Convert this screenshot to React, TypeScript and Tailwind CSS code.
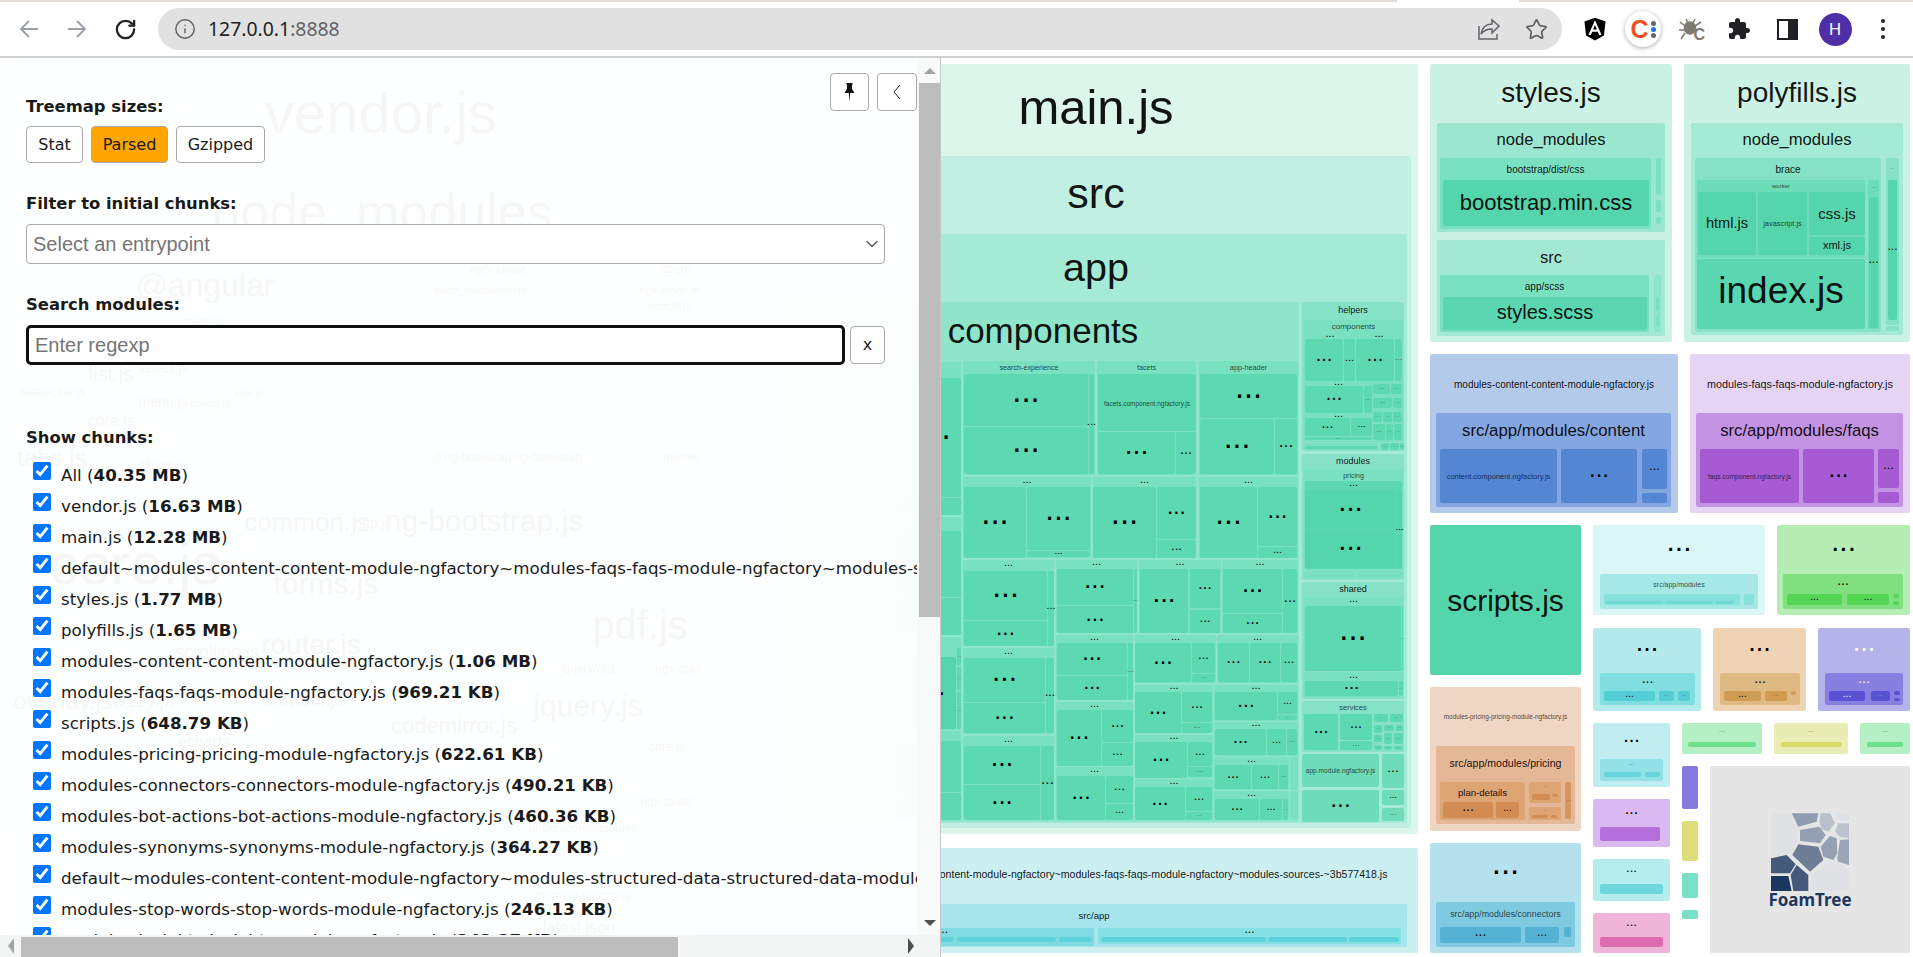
import { ChevronDown, Info, RotateCw, Star } from "lucide-react";
import { FaAngular } from "react-icons/fa";

type Item = {
  x1: number;
  y1: number;
  x2: number;
  y2: number;
  fill: string;
  label?: string;
  size?: number;
  lx?: number;
  ly?: number;
  ink?: string;
};

type Leaf = [number, number, number, number];

const G1 = "#ddf6ec";
const G2 = "#c1efe1";
const G3 = "#a5ead4";
const G4 = "#8fe5ca";
const G5 = "#79e0c0";
const G6 = "#5dd9b2";
const G7 = "#54d5ac";

const box = (
  x1: number,
  y1: number,
  x2: number,
  y2: number,
  fill: string,
  label?: string,
  size?: number,
  ly?: number,
  lx?: number,
  ink?: string,
): Item => ({ x1, y1, x2, y2, fill, label, size, ly, lx, ink });

const ghost = (label: string, size: number, ly: number, lx: number) => box(0, 0, 0, 0, "none", label, size, ly, lx);

const leafs = (list: Leaf[], fill = G6) => list.map(([a, b, c, d]) => box(a, b, c, d, fill, "..."));

// grupo con cabecera de puntos y hojas adentro
const block = (x1: number, y1: number, x2: number, y2: number, hy: number, list: Leaf[]) => [
  box(x1, y1, x2, y2, G5),
  box(x1, y1, x2, hy, "none", "...", 11),
  ...leafs(list),
];

const mainChunk: Item[] = [
  box(700, 64, 1418, 834, G1, "main.js", 49, 107, 1096),
  box(700, 156, 1411, 828, G2, "src", 43, 193, 1096),
  box(700, 234, 1407, 823, G3, "app", 39.5, 267, 1096),
  box(787, 302, 1299, 822, G4, "components", 35, 330, 1043),

  box(900, 362, 961, 515, G5),
  box(913, 378, 961, 497, G6, "...", 33),
  box(900, 498, 961, 515, G6),
  box(900, 517, 961, 635, G5),
  box(900, 531, 961, 597, G6),
  box(900, 598, 961, 635, G6),
  box(900, 637, 961, 730, G5),
  box(913, 657, 956, 729, G7, "...", 26, 694),
  ...leafs([[957, 648, 961, 665], [957, 667, 961, 690], [957, 692, 961, 729]]),
  box(900, 731, 961, 820, G5),
  box(900, 741, 961, 792, G6),
  box(900, 793, 961, 820, G6),

  box(963, 361, 1095, 475, G5, "search-experience", 7.2, 367),
  ...leafs([[964, 374, 1088, 426], [964, 427, 1088, 474], [1089, 374, 1094, 474]]),
  box(1097, 361, 1196, 475, G5, "facets", 7.2, 367),
  box(1098, 374, 1196, 431, G6, "facets.component.ngfactory.js", 6.5, 403),
  ...leafs([[1098, 432, 1175, 474], [1176, 432, 1196, 474]]),
  box(1199, 361, 1298, 475, G5, "app-header", 7.3, 367),
  ...leafs([[1200, 374, 1297, 418], [1200, 419, 1274, 474], [1275, 419, 1297, 474]]),

  ...block(963, 477, 1091, 558, 487, [[964, 487, 1026, 558], [1027, 487, 1090, 550], [1027, 551, 1090, 557]]),
  ...block(1093, 477, 1196, 558, 487, [[1093, 487, 1156, 558], [1157, 487, 1196, 539], [1157, 540, 1196, 558]]),
  ...block(1199, 477, 1298, 558, 487, [[1200, 487, 1257, 558], [1258, 487, 1297, 546], [1258, 547, 1297, 558]]),

  ...block(963, 560, 1054, 646, 571, [[964, 571, 1047, 620], [964, 621, 1047, 646], [1048, 571, 1054, 646]]),
  ...block(963, 648, 1054, 734, 658, [[964, 658, 1045, 702], [964, 703, 1045, 733], [1046, 658, 1054, 733]]),
  ...block(963, 736, 1054, 820, 746, [[964, 746, 1040, 784], [964, 785, 1040, 820], [1041, 746, 1054, 820]]),

  ...block(1056, 560, 1137, 633, 569, [[1057, 569, 1133, 605], [1057, 606, 1133, 633], [1134, 569, 1137, 633]]),
  ...block(1139, 560, 1221, 633, 569, [[1140, 569, 1188, 633], [1190, 569, 1220, 608], [1190, 610, 1220, 633]]),
  ...block(1222, 560, 1298, 633, 569, [[1223, 569, 1282, 613], [1223, 614, 1282, 633], [1283, 569, 1297, 633]]),

  ...block(1056, 635, 1133, 700, 643, [[1057, 643, 1127, 675], [1057, 676, 1127, 700], [1128, 643, 1133, 700]]),
  ...block(1056, 702, 1133, 766, 710, [[1057, 710, 1101, 766], [1102, 710, 1133, 742], [1102, 743, 1133, 766]]),
  ...block(1056, 767, 1133, 820, 776, [[1057, 776, 1105, 820], [1106, 776, 1133, 803], [1106, 804, 1133, 820]]),
  ...block(1135, 635, 1216, 683, 643, [[1135, 643, 1191, 682], [1192, 643, 1215, 673], [1192, 674, 1215, 682]]),
  ...block(1217, 635, 1298, 683, 643, [[1218, 643, 1249, 682], [1250, 643, 1280, 682], [1281, 643, 1297, 682]]),
  ...block(1135, 685, 1213, 733, 692, [[1135, 692, 1181, 733], [1182, 692, 1212, 722], [1182, 723, 1212, 733]]),
  ...block(1135, 735, 1213, 778, 742, [[1135, 742, 1187, 778], [1188, 742, 1212, 766], [1188, 767, 1212, 777]]),
  ...block(1135, 779, 1213, 820, 787, [[1135, 787, 1185, 820], [1186, 787, 1212, 811], [1186, 812, 1212, 820]]),
  ...block(1214, 685, 1298, 721, 692, [[1215, 692, 1277, 720], [1278, 692, 1297, 714], [1278, 715, 1297, 720]]),
  ...block(1214, 722, 1298, 756, 729, [[1215, 729, 1266, 755], [1267, 729, 1286, 755], [1287, 729, 1297, 755]]),
  ...block(1214, 757, 1289, 790, 765, [[1215, 765, 1251, 789], [1252, 765, 1278, 789], [1279, 765, 1288, 789]]),
  ...block(1214, 791, 1289, 820, 799, [[1215, 799, 1259, 820], [1260, 799, 1282, 820], [1283, 799, 1288, 820]]),
  box(1290, 757, 1298, 790, G5),
  box(1290, 791, 1298, 820, G5),

  // helpers
  box(1302, 302, 1404, 451, "#85e2c6", "helpers", 9, 310),
  box(1304, 320, 1403, 442, G5, "components", 8, 326),
  ...block(1305, 334, 1355, 381, 339, [[1305, 339, 1343, 381], [1344, 339, 1355, 381]]),
  ...block(1356, 334, 1402, 381, 339, [[1356, 339, 1394, 381], [1395, 339, 1402, 381]]),
  ...block(1305, 382, 1372, 413, 386, [[1305, 386, 1363, 413], [1364, 386, 1372, 413]]),
  ...block(1305, 414, 1372, 440, 418, [[1305, 418, 1350, 436], [1351, 418, 1372, 436], [1305, 437, 1372, 440]]),
  ...leafs([
    [1373, 384, 1390, 394], [1391, 384, 1402, 394], [1373, 398, 1392, 408], [1393, 398, 1402, 408],
    [1373, 412, 1382, 422], [1383, 412, 1392, 422], [1393, 412, 1402, 422], [1373, 424, 1385, 440],
    [1386, 424, 1393, 440], [1394, 424, 1402, 440],
  ]),
  box(1304, 443, 1378, 450, G5),
  box(1305, 446, 1377, 449, G6),
  ...leafs([[1381, 443, 1389, 450], [1390, 443, 1399, 450], [1400, 443, 1404, 450]]),

  // modules
  box(1302, 454, 1404, 580, "#85e2c6", "modules", 9, 461),
  box(1304, 469, 1403, 570, G5, "pricing", 7, 475),
  box(1305, 481, 1402, 569, G6, "...", 11, 485),
  ...leafs([[1305, 491, 1396, 529], [1305, 530, 1396, 568], [1397, 491, 1402, 568]], G7),
  box(1304, 571, 1355, 578, G5),
  box(1357, 571, 1403, 578, G5),

  // shared
  box(1302, 582, 1404, 699, "#85e2c6", "shared", 9, 589),
  box(1304, 597, 1403, 671, G5, "...", 11, 601),
  ...leafs([[1305, 606, 1401, 671], [1402, 606, 1403, 671]]),
  box(1304, 672, 1403, 697, G5, "...", 11, 677),
  ...leafs([[1305, 681, 1398, 696], [1399, 681, 1403, 696]]),

  // services
  box(1302, 701, 1404, 752, "#85e2c6", "services", 7.5, 707),
  ...leafs([
    [1304, 714, 1338, 750], [1340, 714, 1372, 740], [1340, 741, 1372, 750], [1374, 714, 1388, 722],
    [1390, 714, 1403, 722], [1374, 725, 1382, 733], [1384, 725, 1394, 731], [1396, 725, 1403, 731],
    [1374, 735, 1382, 742], [1384, 733, 1392, 744], [1394, 733, 1403, 744], [1374, 745, 1382, 750],
    [1384, 746, 1392, 750], [1394, 746, 1403, 750],
  ]),

  box(1302, 754, 1379, 787, "#6edcb9", "app.module.ngfactory.js", 6.6),
  box(1382, 754, 1404, 788, "#6edcb9", "..."),
  box(1302, 790, 1379, 822, "#6edcb9", "..."),
  box(1382, 790, 1404, 805, "#6edcb9", "..."),
  box(1382, 808, 1404, 821, "#6edcb9", "..."),
];

const sharedChunk: Item[] = [
  box(700, 848, 1418, 953, "#cceff1", "default~modules-content-content-module-ngfactory~modules-faqs-faqs-module-ngfactory~modules-sources-~3b577418.js", 10.6, 874, 1101),
  box(700, 904, 1407, 947, "#a6e5eb", "src/app", 9.5, 915, 1094),
  box(700, 928, 1094, 946, "#7fdae2", "...", 12, 932, 943),
  box(700, 937, 954, 942, "#5cd3dc"),
  box(957, 937, 1056, 942, "#5cd3dc"),
  box(1059, 937, 1092, 942, "#5cd3dc"),
  box(1098, 928, 1401, 944, "#85e0e4", "...", 12, 932),
  box(1101, 937, 1266, 942, "#5cd3dc"),
  box(1268, 937, 1347, 942, "#5cd3dc"),
  box(1349, 937, 1399, 942, "#5cd3dc"),
];

const stylesChunk: Item[] = [
  box(1430, 64, 1672, 342, "#ccf2e6", "styles.js", 28, 92),
  box(1437, 123, 1665, 232, "#9be6cf", "node_modules", 16.6, 139),
  box(1440, 158, 1651, 229, G5, "bootstrap/dist/css", 10, 169),
  box(1443, 180, 1649, 226, G7, "bootstrap.min.css", 22, 202),
  box(1656, 158, 1661, 195, G5),
  box(1656, 200, 1661, 212, G5),
  box(1656, 217, 1661, 224, G5),
  box(1437, 240, 1665, 336, "#a3e8d3", "src", 16.6, 257),
  box(1440, 275, 1649, 332, G5, "app/scss", 10, 286),
  box(1443, 297, 1647, 330, "#5ad6b0", "styles.scss", 20, 312),
  box(1654, 275, 1661, 332, "#8de4c9"),
  box(1656, 297, 1659, 311, G5),
  box(1656, 316, 1659, 326, G5),
];

const polyfillsChunk: Item[] = [
  box(1684, 64, 1910, 342, "#ccf2e6", "polyfills.js", 28, 92),
  box(1691, 123, 1903, 335, G3, "node_modules", 16.6, 139),
  box(1695, 158, 1881, 332, "#85e2c6", "brace", 10, 169),
  box(1697, 180, 1865, 258, "#6edcb9", "worker", 6, 186),
  box(1698, 192, 1756, 255, G7, "html.js", 14.6, 223),
  box(1758, 192, 1807, 255, G7, "javascript.js", 7.4, 223),
  box(1809, 192, 1865, 235, G7, "css.js", 15, 213),
  box(1809, 237, 1865, 255, G7, "xml.js", 11, 245),
  box(1697, 259, 1865, 329, "#5ad6b0", "index.js", 37, 290),
  box(1868, 180, 1879, 329, "#6edcb9", "...", 5, 188),
  box(1869, 197, 1878, 328, G7, "...", 12, 262),
  box(1886, 158, 1899, 325, "#85e2c6", "...", 5, 169),
  box(1888, 180, 1897, 320, G7, "...", 12, 249),
  box(1886, 326, 1899, 331, "#85e2c6"),
];

const moduleChunks: Item[] = [
  box(1430, 354, 1678, 513, "#b3caeb", "modules-content-content-module-ngfactory.js", 10, 384),
  box(1436, 413, 1671, 507, "#83a6e0", "src/app/modules/content", 16.8, 430),
  box(1440, 449, 1557, 503, "#5586d3", "content.component.ngfactory.js", 7.5),
  box(1561, 449, 1637, 503, "#5586d3", "...", 24),
  box(1642, 449, 1667, 489, "#5586d3", "...", 13),
  box(1642, 493, 1667, 503, "#5586d3", "...", 6),

  box(1690, 354, 1910, 513, "#e6d4f5", "modules-faqs-faqs-module-ngfactory.js", 10.8, 384),
  box(1696, 413, 1903, 507, "#c492e3", "src/app/modules/faqs", 16.7, 430),
  box(1700, 449, 1799, 503, "#a65bd5", "faqs.component.ngfactory.js", 6.7),
  box(1803, 449, 1874, 503, "#a65bd5", "...", 24),
  box(1878, 449, 1899, 488, "#a65bd5", "...", 13),
  box(1878, 492, 1899, 503, "#a65bd5", "...", 6),

  box(1430, 525, 1581, 675, G7, "scripts.js", 30),

  box(1593, 525, 1765, 615, "#dbf6f6", "...", 30, 549),
  box(1600, 574, 1758, 609, "#a5e8e5", "src/app/modules", 7, 584),
  box(1604, 594, 1740, 605, "#86e0dc"),
  box(1606, 601, 1663, 604, "#6fd9d4"),
  box(1665, 601, 1713, 604, "#6fd9d4"),
  box(1715, 601, 1734, 604, "#6fd9d4"),
  box(1744, 594, 1754, 605, "#86e0dc"),

  box(1777, 525, 1910, 615, "#b6edb4", "...", 30, 549),
  box(1783, 574, 1903, 609, "#80e080", "...", 14, 584),
  box(1787, 594, 1842, 605, "#54d554", "...", 10),
  box(1847, 594, 1889, 605, "#54d554", "...", 10),
  box(1893, 594, 1899, 598, "#54d554"),
  box(1893, 601, 1899, 605, "#54d554"),

  box(1593, 628, 1701, 711, "#b5eaec", "...", 27, 650),
  box(1600, 673, 1695, 705, "#80dde0", "...", 14, 682),
  box(1604, 691, 1655, 701, "#54cdd5", "...", 10),
  box(1659, 691, 1674, 701, "#54cdd5", "...", 6),
  box(1678, 691, 1690, 701, "#54cdd5", "...", 6),

  box(1713, 628, 1806, 711, "#eed4b5", "...", 27, 650),
  box(1720, 673, 1800, 705, "#e0b882", "...", 14, 682),
  box(1724, 691, 1761, 701, "#d09c54", "...", 10),
  box(1765, 691, 1787, 701, "#d09c54", "...", 6),
  box(1791, 691, 1796, 695, "#d09c54"),

  box(1818, 628, 1910, 711, "#b6b2ea", "...", 27, 650, undefined, "#ffffff"),
  box(1825, 673, 1903, 705, "#8880e0", "...", 14, 682, undefined, "#ffffff"),
  box(1829, 691, 1865, 701, "#5a52d5", "...", 10, undefined, undefined, "#ffffff"),
  box(1871, 691, 1890, 701, "#5a52d5", "...", 6, undefined, undefined, "#ffffff"),
  box(1894, 691, 1900, 695, "#5a52d5"),
  box(1894, 698, 1900, 701, "#5a52d5"),

  box(1430, 687, 1581, 831, "#efd5c3", "modules-pricing-pricing-module-ngfactory.js", 6.4, 716),
  box(1436, 746, 1575, 824, "#e4b896", "src/app/modules/pricing", 10.6, 763),
  box(1440, 782, 1525, 820, "#dea574", "plan-details", 9.6, 792),
  box(1443, 802, 1493, 818, "#d28c52", "...", 14),
  box(1496, 802, 1519, 818, "#d28c52", "...", 10),
  box(1529, 782, 1561, 803, "#dea574", "...", 5, 787),
  box(1532, 794, 1550, 800, "#d28c52"),
  box(1552, 794, 1558, 797, "#d28c52"),
  box(1529, 807, 1561, 820, "#dea574", "...", 5, 811),
  box(1532, 815, 1548, 818, "#d28c52"),
  box(1551, 815, 1557, 818, "#d28c52"),
  box(1565, 782, 1571, 819, "#d8955e", "...", 5),

  box(1430, 843, 1581, 953, "#b5e0ee", "...", 33, 872),
  box(1436, 902, 1575, 947, "#80cae1", "src/app/modules/connectors", 8.85, 914),
  box(1440, 927, 1521, 943, "#54b3d5", "...", 14),
  box(1525, 927, 1559, 943, "#54b3d5", "...", 12),
  box(1564, 927, 1571, 937, "#54b3d5", "...", 4),

  box(1593, 723, 1670, 787, "#c2edf0", "...", 20, 741),
  box(1600, 759, 1663, 781, "#93e1e6", "...", 7, 765),
  box(1604, 772, 1641, 777, "#66d4dd"),
  box(1645, 772, 1660, 777, "#66d4dd"),

  box(1682, 723, 1762, 754, "#b5f0c5", "...", 7, 732),
  box(1688, 742, 1756, 747, "#6dde8a"),
  box(1774, 723, 1848, 754, "#e8ecb5", "...", 7, 732),
  box(1781, 742, 1842, 747, "#d5db66"),
  box(1860, 723, 1910, 754, "#b5f0c5", "...", 7, 732),
  box(1867, 742, 1903, 747, "#6dde8a"),

  box(1593, 799, 1670, 847, "#dab8f0", "...", 16, 813),
  box(1600, 827, 1660, 841, "#b46fdc"),
  box(1593, 859, 1670, 901, "#b5ecec", "...", 13, 871),
  box(1600, 884, 1663, 894, "#6dd7de"),
  box(1593, 913, 1670, 953, "#eeb5d9", "...", 13, 925),
  box(1600, 937, 1663, 947, "#dd6db0"),

  box(1682, 766, 1698, 809, "#857adf"),
  box(1682, 821, 1698, 861, "#dfdc7b"),
  box(1682, 873, 1698, 898, "#7be0c8"),
  box(1682, 910, 1698, 919, "#7be0c8"),
  box(1710, 766, 1910, 953, "#e5e5e5"),
];

// vendor.js queda detrás del panel, casi no se ve
const vendorChunk: Item[] = [
  box(0, 58, 930, 830, G1),
  box(10, 170, 925, 960, G2),
  box(16, 250, 388, 960, G3),
  box(402, 278, 592, 440, G3),
  box(605, 278, 750, 440, G3),
  box(785, 300, 912, 640, G3),
  box(260, 480, 390, 720, G3),
  box(402, 470, 592, 640, G3),
  box(605, 470, 750, 640, G3),
  box(402, 690, 500, 880, G3),
  box(535, 690, 640, 790, G3),
  box(650, 690, 750, 790, G3),
  box(535, 800, 640, 950, G3),
  box(650, 800, 750, 950, G3),
  ghost("vendor.js", 58, 112, 381),
  ghost("node_modules", 52, 212, 382),
  ghost("@angular", 32, 285, 205),
  ghost("ng5-slider", 13, 269, 498),
  ghost("@ctrl", 13, 269, 676),
  ghost("node_modules/rxjs", 11, 290, 480),
  ghost("ngx-emoji-mart", 11, 290, 676),
  ghost("fesm2015", 10, 306, 670),
  ghost("material", 11, 321, 204),
  ghost("fesm2015", 11, 340, 180),
  ghost("list.js", 20, 374, 111),
  ghost("select.js", 14, 368, 163),
  ghost("datepicker.js", 12, 392, 52),
  ghost("menu.js", 14, 402, 163),
  ghost("dialog.js", 11, 403, 210),
  ghost("icon.js", 10, 393, 249),
  ghost("core.js", 16, 420, 111),
  ghost("tabs.js", 24, 457, 52),
  ghost("chips.js", 14, 465, 163),
  ghost("core.js", 58, 563, 135),
  ghost("common.js", 26, 522, 307),
  ghost("http.js", 14, 523, 373),
  ghost("forms.js", 30, 583, 326),
  ghost("router.js", 28, 644, 311),
  ghost("scrolling.js", 18, 652, 217),
  ghost("browser.js", 18, 700, 303),
  ghost("overlay.js", 24, 700, 63),
  ghost("a11y.js", 20, 700, 144),
  ghost("echarts", 16, 741, 204),
  ghost("@ng-bootstrap/ng-bootstrap", 12, 457, 507),
  ghost("moment", 12, 457, 685),
  ghost("ng-bootstrap.js", 30, 520, 484),
  ghost("pdf.js", 40, 625, 640),
  ghost("jquery/dist", 12, 669, 588),
  ghost("ngx-color-picker", 12, 669, 698),
  ghost("jquery.js", 30, 705, 588),
  ghost("codemirror.js", 22, 725, 454),
  ghost("core-js", 12, 747, 667),
  ghost("ngx-toastr", 12, 802, 667),
  ghost("underscore/modules", 12, 828, 583),
  ghost("moment-timezone", 12, 896, 583),
  ghost("latest.json", 16, 927, 579),
  ghost("react-templates", 11, 369, 874),
];

const treemap: Item[] = [
  ...vendorChunk,
  ...mainChunk,
  ...sharedChunk,
  ...stylesChunk,
  ...polyfillsChunk,
  ...moduleChunks,
];

const chunks: [string, string][] = [
  ["All", "40.35 MB"],
  ["vendor.js", "16.63 MB"],
  ["main.js", "12.28 MB"],
  ["default~modules-content-content-module-ngfactory~modules-faqs-faqs-module-ngfactory~modules-sources-~3b577418.js", "1.89 MB"],
  ["styles.js", "1.77 MB"],
  ["polyfills.js", "1.65 MB"],
  ["modules-content-content-module-ngfactory.js", "1.06 MB"],
  ["modules-faqs-faqs-module-ngfactory.js", "969.21 KB"],
  ["scripts.js", "648.79 KB"],
  ["modules-pricing-pricing-module-ngfactory.js", "622.61 KB"],
  ["modules-connectors-connectors-module-ngfactory.js", "490.21 KB"],
  ["modules-bot-actions-bot-actions-module-ngfactory.js", "460.36 KB"],
  ["modules-synonyms-synonyms-module-ngfactory.js", "364.27 KB"],
  ["default~modules-content-content-module-ngfactory~modules-structured-data-structured-data-module-ngfactory.js", "312.40 KB"],
  ["modules-stop-words-stop-words-module-ngfactory.js", "246.13 KB"],
  ["modules-insights-insights-module-ngfactory.js", "243.27 KB"],
];

function TreemapNode({ item }: { item: Item }) {
  const { x1, y1, x2, y2, fill, label, size, lx, ly, ink } = item;
  const w = x2 - x1;
  const h = y2 - y1;
  const cx = lx ?? (x1 + x2) / 2;
  const cy = ly ?? (y1 + y2) / 2;
  const isDots = label === "...";
  const fontSize = size ?? Math.min(33, Math.max(5, Math.sqrt(w * h) * 0.5));
  return (
    <>
      {w > 0 && fill !== "none" && <rect x={x1} y={y1} width={w} height={h} rx={2} fill={fill} />}
      {label && isDots && (
        <text
          x={cx}
          y={cy + fontSize * 0.05}
          fontSize={fontSize}
          textAnchor="middle"
          fill={ink ?? "#000"}
          fillOpacity={fontSize < 9 ? 0.5 : 1}
        >
          ...
        </text>
      )}
      {label && !isDots && (
        <text
          x={cx}
          y={cy}
          fontSize={fontSize}
          textAnchor="middle"
          dominantBaseline="central"
          fill={ink ?? "#000"}
          fillOpacity={fontSize < 9 ? 0.72 : 0.92}
        >
          {label}
        </text>
      )}
    </>
  );
}

function FoamTreeLogo() {
  return (
    <g>
      <g transform="translate(1760 805) scale(0.3333)">
        <path d="M33 37Q33 25 45 25L92 25L112 68L108 130L95 145L33 155Z" fill="#dfe1e4" />
        <path d="M95 25L175 25L170 50L115 65Z" fill="#8f9cb0" />
        <path d="M182 25L210 25L225 55L205 80L185 72L178 50Z" fill="#b9c0cc" />
        <path d="M225 25L267 25L267 45L238 45Z" fill="#dde0e4" />
        <path d="M235 55L267 55L267 100L240 95L225 80Z" fill="#bcc3ce" />
        <path d="M120 75L178 65L197 90L180 115L120 108Z" fill="#939fb3" />
        <path d="M210 93L230 100L232 145L220 165L190 155L182 125Z" fill="#94a0b4" />
        <path d="M115 118L175 125L190 165L150 200L97 150Z" fill="#6d7d95" />
        <path d="M240 105L267 103L267 180L235 170L232 160Z" fill="#9aa5b7" />
        <path d="M33 160L80 150L107 178L90 205L33 205Z" fill="#45597a" />
        <path d="M110 180L145 210L145 258L100 258L92 210Z" fill="#45597a" />
        <path d="M33 213L85 213L95 258L33 258Z" fill="#1c3660" />
        <path d="M155 205L205 175L245 180L267 195L267 245Q267 258 255 258L155 258Z" fill="#dfe1e4" />
      </g>
      <text x={1810} y={906} fontSize={17} fontWeight={700} textAnchor="middle" fill="#1c3660" className="font-['Noto_Sans']">
        FoamTree
      </text>
    </g>
  );
}

function BrowserBar() {
  return (
    <header className="bg-white font-['Noto_Sans',sans-serif]">
      <div className="flex h-[2px]">
        <div className="w-[1397px] bg-[#e2dcd6]" />
        <div className="w-[122px]" />
        <div className="flex-1 bg-[#e2dcd6]" />
      </div>
      <div className="flex h-[54px] items-center">
        <div className="flex w-[158px] items-center pl-[5px]">
          <div className="flex w-[48px] justify-center">
            <svg width="20" height="20" viewBox="0 0 20 20" fill="none" stroke="#9aa0a6" strokeWidth="1.8">
              <path d="M19 10H2M10 2l-8 8 8 8" />
            </svg>
          </div>
          <div className="flex w-[48px] justify-center">
            <svg width="20" height="20" viewBox="0 0 20 20" fill="none" stroke="#9aa0a6" strokeWidth="1.8">
              <path d="M1 10h17M10 2l8 8-8 8" />
            </svg>
          </div>
          <div className="flex w-[48px] justify-center">
            <RotateCw size={23} strokeWidth={2.4} color="#202124" />
          </div>
        </div>
        <div className="flex h-[42px] w-[1404px] items-center justify-between rounded-full bg-[#e1e1e1] pl-[16px] pr-[14px]">
          <div className="flex items-center gap-[12px]">
            <Info size={22} strokeWidth={1.6} color="#5f6368" />
            <span className="text-[19.4px] text-[#202124]">
              127.0.0.1<span className="text-[#5f6368]">:8888</span>
            </span>
          </div>
          <div className="flex items-center gap-[24px]">
            <svg width="24" height="24" viewBox="0 0 24 24" fill="none" stroke="#5f6368" strokeWidth="1.5">
              <path d="M2 9v13h18v-5M22 9l-7-6v4c-7 0-10 4-11 10 3-4 6-5 11-5v4z" />
            </svg>
            <Star size={23} strokeWidth={1.8} color="#5f6368" />
          </div>
        </div>
        <div className="ml-[9px] flex items-center">
          <div className="flex w-[48px] justify-center">
            <FaAngular size={26} color="#000" />
          </div>
          <div className="flex w-[48px] justify-center">
            <div className="flex h-[36px] w-[36px] items-center justify-center gap-[2px] rounded-full bg-white shadow-[0_1px_4px_rgba(0,0,0,0.35)]">
              <span className="font-['Liberation_Sans'] text-[25px] font-bold leading-none text-[#f0521f]">C</span>
              <div className="flex flex-col gap-[1px]">
                <div className="h-[5px] w-[5px] rounded-full bg-[#666]" />
                <div className="h-[5px] w-[5px] rounded-full bg-[#1a73e8]" />
                <div className="h-[5px] w-[5px] rounded-full bg-[#666]" />
              </div>
            </div>
          </div>
          <div className="flex w-[48px] justify-center">
            <div className="relative h-[24px] w-[24px]">
              <svg width="24" height="24" viewBox="0 0 24 24" fill="none" stroke="#7d7a74" strokeWidth="1.6">
                <ellipse cx="11" cy="11" rx="5.5" ry="6" fill="#7d7a74" />
                <path d="M7 2l2 4M16 2l-2 4M1 5l5 4M22 5l-6 4M0 13h6M2 22l4-6M16 17l1 2" />
              </svg>
              <span className="absolute bottom-[-2px] right-[-2px] font-['Liberation_Sans'] text-[16px] font-bold leading-none text-[#7d7a74]">C</span>
            </div>
          </div>
          <div className="flex w-[48px] justify-center">
            <svg width="24" height="24" viewBox="0 0 24 24" fill="#202124">
              <path d="M20.5 11H19V7c0-1.1-.9-2-2-2h-4V3.5C13 2.12 11.88 1 10.5 1S8 2.12 8 3.5V5H4c-1.1 0-1.99.9-1.99 2v3.8H3.5c1.49 0 2.7 1.21 2.7 2.7s-1.21 2.7-2.7 2.7H2V20c0 1.1.9 2 2 2h3.8v-1.5c0-1.49 1.21-2.7 2.7-2.7 1.49 0 2.7 1.21 2.7 2.7V22H17c1.1 0 2-.9 2-2v-4h1.5c1.38 0 2.5-1.12 2.5-2.5S21.88 11 20.5 11z" />
            </svg>
          </div>
          <div className="flex w-[48px] justify-center">
            <div className="flex h-[21px] w-[21px] justify-end border-[2px] border-[#202124] bg-white">
              <div className="h-full w-[8px] bg-[#202124]" />
            </div>
          </div>
          <div className="flex w-[48px] justify-center">
            <div className="flex h-[33px] w-[33px] items-center justify-center rounded-full bg-[#4e2fa7] text-[17px] text-white">H</div>
          </div>
          <div className="flex w-[48px] flex-col items-center gap-[4px]">
            <div className="h-[4px] w-[4px] rounded-full bg-[#202124]" />
            <div className="h-[4px] w-[4px] rounded-full bg-[#202124]" />
            <div className="h-[4px] w-[4px] rounded-full bg-[#202124]" />
          </div>
        </div>
      </div>
      <div className="h-[2px] bg-[#d0d0d0]" />
    </header>
  );
}

function Sidebar() {
  return (
    <aside className="absolute bottom-0 left-0 top-0 flex w-[941px] flex-col border-r border-[#c8c8c8] bg-white/[0.965] font-['DejaVu_Sans',sans-serif] text-[16.7px] text-[#1a1a1a]">
      <div className="flex min-h-0 flex-1">
        <div className="relative min-w-0 flex-1 overflow-hidden pl-[26px]">
          <div className="absolute right-[0px] top-[15px] flex gap-[8px]">
            <button className="flex h-[38px] w-[39px] items-center justify-center rounded-[4px] border border-[#aaa] bg-white">
              <svg width="11" height="19" viewBox="0 0 11 19" fill="#111">
                <path d="M2.5 0h6v1.5L8 2v4l2.5 4H.5L3 6V2l-.5-.5zM4.8 10h1.4L5.5 19z" />
              </svg>
            </button>
            <button className="flex h-[38px] w-[40px] items-center justify-center rounded-[4px] border border-[#aaa] bg-white">
              <svg width="10" height="16" viewBox="0 0 10 16" fill="none" stroke="#222" strokeWidth="1">
                <path d="M8 1L2 8l6 7" />
              </svg>
            </button>
          </div>

          <div className="pt-[38px] text-[16.4px] font-bold leading-[22px]">Treemap sizes:</div>
          <div className="mt-[8px] flex gap-[8px] text-[16px]">
            <button className="h-[37px] w-[57px] rounded-[4px] border border-[#aaa] bg-white">Stat</button>
            <button className="h-[37px] w-[77px] rounded-[4px] border border-[#aaa] bg-[#ffa500]">Parsed</button>
            <button className="h-[37px] w-[89px] rounded-[4px] border border-[#aaa] bg-white">Gzipped</button>
          </div>

          <div className="mt-[30px] text-[16.4px] font-bold leading-[22px]">Filter to initial chunks:</div>
          <div className="relative mt-[9px] w-[859px]">
            <select className="h-[40px] w-full appearance-none rounded-[4px] border border-[#aaa] bg-white pl-[6px] font-['Liberation_Sans'] text-[20px] text-[#757575]">
              <option>Select an entrypoint</option>
            </select>
            <ChevronDown size={20} strokeWidth={1.6} color="#555" className="absolute right-[3px] top-[10px]" />
          </div>

          <div className="mt-[30px] text-[16.4px] font-bold leading-[22px]">Search modules:</div>
          <div className="mt-[9px] flex w-[859px] items-center gap-[5px]">
            <input
              placeholder="Enter regexp"
              readOnly
              className="h-[40px] flex-1 rounded-[5px] border-[3px] border-[#101010] bg-white pl-[6px] font-['Liberation_Sans'] text-[20px] placeholder:text-[#757575]"
            />
            <button className="h-[38px] w-[35px] rounded-[4px] border border-[#aaa] bg-white text-[16px]">x</button>
          </div>

          <div className="mt-[62px] text-[16.4px] font-bold leading-[22px]">Show chunks:</div>
          <div className="mt-[11px] flex flex-col">
            {chunks.map(([name, size]) => (
              <label key={name} className="flex h-[31px] items-center whitespace-nowrap pl-[7px]">
                <input type="checkbox" checked readOnly className="mb-[9px] mr-[10px] h-[18px] w-[18px] shrink-0 accent-[#0075ff]" />
                <span>
                  {name} (<b>{size}</b>)
                </span>
              </label>
            ))}
          </div>
        </div>

        <div className="flex w-[23px] shrink-0 flex-col items-center bg-[#f8f9f9] pl-[2px]">
          <div className="flex h-[25px] items-center justify-center">
            <div className="h-0 w-0 border-x-[6px] border-b-[6px] border-x-transparent border-b-[#a3a3a3]" />
          </div>
          <div className="h-[534px] w-full bg-[#bcbcbc]" />
          <div className="flex-1" />
          <div className="flex h-[25px] items-center justify-center">
            <div className="h-0 w-0 border-x-[6px] border-t-[6px] border-x-transparent border-t-[#505050]" />
          </div>
        </div>
      </div>

      <div className="flex h-[22px] shrink-0 items-end bg-[#f3f4f4]">
        <div className="flex h-full w-[21px] items-center justify-center">
          <div className="h-0 w-0 border-y-[8px] border-r-[6px] border-y-transparent border-r-[#a3a3a3]" />
        </div>
        <div className="h-[20px] w-[657px] bg-[#bcbcbc]" />
        <div className="flex-1" />
        <div className="flex h-full w-[37px] items-center justify-start pl-[5px]">
          <div className="h-0 w-0 border-y-[8px] border-l-[6px] border-y-transparent border-l-[#505050]" />
        </div>
      </div>
    </aside>
  );
}

export default function App() {
  return (
    <div className="flex h-[957px] w-[1913px] flex-col overflow-hidden bg-white">
      <BrowserBar />
      <main className="relative flex-1">
        {/* el treemap es un dibujo; coordenadas de pantalla completa */}
        <svg width="1913" height="899" viewBox="0 58 1913 899" className="block font-['Liberation_Sans',sans-serif]">
          {treemap.map((item, i) => (
            <TreemapNode key={i} item={item} />
          ))}
          <FoamTreeLogo />
        </svg>
        <Sidebar />
      </main>
    </div>
  );
}
